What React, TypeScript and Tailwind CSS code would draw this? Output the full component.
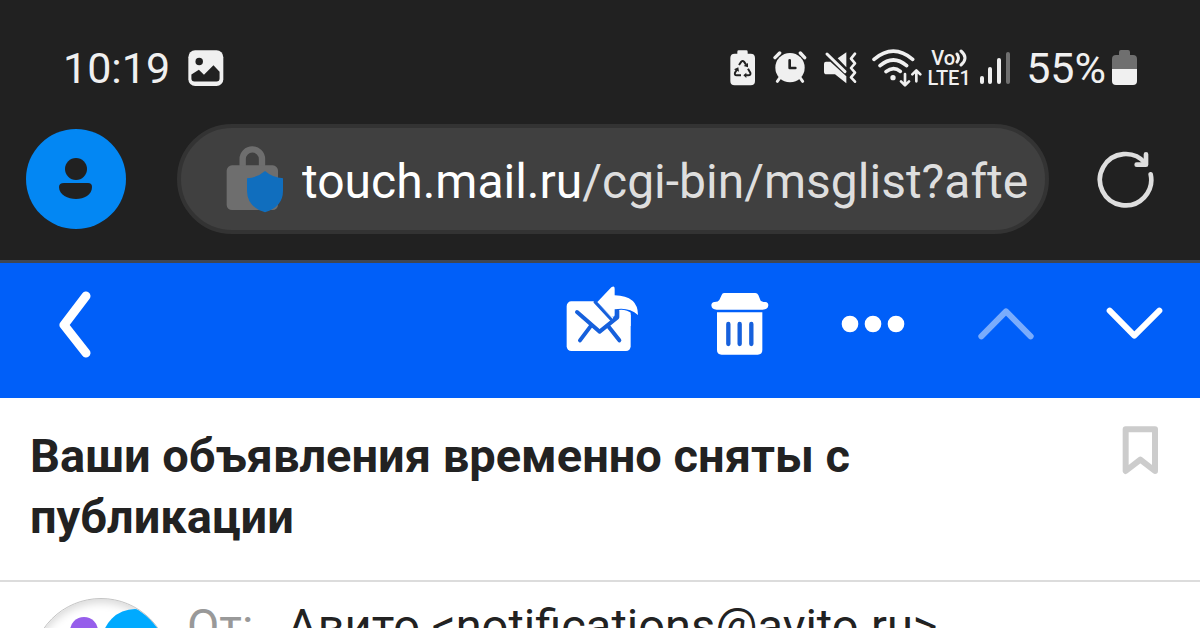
import { useState } from 'react';

const SIGNAL_BARS = [
  { x: 0, y: 24, h: 8, on: true },
  { x: 8, y: 15, h: 17, on: true },
  { x: 17, y: 6, h: 26, on: true },
  { x: 26, y: 0, h: 32, on: false },
];

function StatusBar() {
  return (
    <div className="flex h-9 items-center justify-between px-[63px] text-[#f0f0f0]">
      <div className="flex items-center gap-[18px]">
        <span className="text-[43px] leading-9">10:19</span>
        {/* Picture notification */}
        <svg width="36" height="36" viewBox="446 61 106 106">
          <rect x="447" y="62" width="103" height="105" rx="20" fill="#f0f0f0" />
          <circle cx="479" cy="95" r="11" fill="#212121" />
          <path d="M456 133L478 119L493 134L521 106L539 125V145Q539 154 530 154H465Q456 154 456 145Z" fill="#212121" />
        </svg>
      </div>

      <div className="flex items-center">
        {/* Battery protection */}
        <svg width="26" height="36" viewBox="44 45 78 108" className="mr-[17px]">
          <path d="M66 50Q66 46 70 46H93Q97 46 97 50V56H106Q119 56 119 69V138Q119 151 106 151H58Q45 151 45 138V69Q45 56 58 56H66Z" fill="#f0f0f0" />
          <g fill="none" stroke="#212121" strokeWidth="6" strokeLinejoin="round">
            <path d="M71 90L78 80Q82 76 86 80L92 89" />
            <path d="M98 101L105 113Q107 121 99 121H91" />
            <path d="M77 121H64Q57 121 59 113L64 105" />
          </g>
          <path d="M98 84V97L85 93ZM93 113V129L84 121ZM56 103L69 97L71 110Z" fill="#212121" />
        </svg>
        {/* Alarm */}
        <svg width="34" height="36" viewBox="173 48 102 108" className="mr-4">
          <circle cx="224" cy="101" r="44" fill="#f0f0f0" />
          <g fill="none" strokeLinecap="round">
            <path d="M179 71L193 57M255 57L268 71" stroke="#f0f0f0" strokeWidth="10" />
            <path d="M194 131L186 142M254 131L262 142" stroke="#f0f0f0" strokeWidth="9" />
            <path d="M223 79V102H240" stroke="#212121" strokeWidth="8" strokeLinejoin="round" />
          </g>
        </svg>
        {/* Vibrate */}
        <svg width="34" height="36" viewBox="323 45 102 108" className="mr-[15px]">
          <path d="M367 70L393 52V97ZM326 86Q326 80 332 80H345L393 124V145L359 118H334Q326 118 326 110Z" fill="#f0f0f0" />
          <g fill="none" stroke="#f0f0f0" strokeWidth="9" strokeLinecap="round" strokeLinejoin="round">
            <path d="M335 57L389 110" />
            <path d="M419 56L407 71L419 85L407 99L419 113L407 127L419 140" strokeWidth="8" />
          </g>
        </svg>
        {/* Wi-Fi with traffic arrows */}
        <svg width="50" height="38" viewBox="470 40 150 114" className="mr-[6px]">
          <g fill="none" stroke="#f0f0f0" strokeWidth="11" strokeLinecap="round" strokeLinejoin="round">
            <path d="M476 71Q534 22 592 71" />
            <path d="M494 90Q534 56 574 90" />
            <path d="M512 108Q534 90 555 107" />
            <path d="M569 115V148M557 137L569 149L581 137" strokeWidth="8" />
            <path d="M603 137V105M591 116L603 104L615 116" strokeWidth="8" />
          </g>
          <circle cx="533" cy="126" r="8" fill="#f0f0f0" />
        </svg>
        <div className="mr-[10px] flex w-[42px] flex-col items-center text-[20px] font-medium leading-5">
          <span className="flex items-center">
            Vo
            <svg width="12" height="18" viewBox="0 0 12 18" fill="none" stroke="#f0f0f0" strokeWidth="3" strokeLinecap="round">
              <path d="M2 5Q5 9 2 13M6 2Q14 9 6 16" />
            </svg>
          </span>
          <span>LTE1</span>
        </div>
        <svg width="30" height="32" viewBox="0 0 30 32" className="mr-4">
          {SIGNAL_BARS.map((bar) => (
            <rect key={bar.x} x={bar.x} y={bar.y} width="4" height={bar.h} rx="2" fill={bar.on ? '#f0f0f0' : '#6f6f6f'} />
          ))}
        </svg>
        <span className="mr-[6px] text-[43px] leading-9">55%</span>
        {/* Battery level */}
        <svg width="25" height="36" viewBox="0 0 25 36">
          <path d="M7 2Q7 0 9 0H16Q18 0 18 2V5H21Q25 5 25 9V19H0V9Q0 5 4 5H7Z" fill="#6f6f6f" />
          <path d="M0 19H25V31Q25 35 21 35H4Q0 35 0 31Z" fill="#f0f0f0" />
        </svg>
      </div>
    </div>
  );
}

function AddressBar() {
  return (
    <div className="mt-[38px] flex items-center pl-[26px] pr-[46px]">
      <button type="button" aria-label="Профиль" className="shrink-0">
        <svg width="100" height="100" viewBox="0 0 100 100">
          <circle cx="50" cy="50" r="50" fill="#0387f3" />
          <circle cx="50" cy="40" r="11" fill="#212121" />
          <path d="M38 54H62Q66 54 66 58C66 66 58 70 50 70S33 66 33 58Q33 54 38 54Z" fill="#212121" />
        </svg>
      </button>

      <button
        type="button"
        className="ml-[51px] mr-[47px] flex h-[110px] min-w-0 flex-1 items-center overflow-hidden rounded-full border-4 border-[#333333] bg-[#404040] pl-[45px] pr-4 text-left"
      >
        {/* Lock with a shield */}
        <svg width="58" height="68" viewBox="678 107 174 204" className="mr-[18px] shrink-0">
          <path d="M728 172V149A29 29 0 0 1 786 149V172" fill="none" stroke="#6e6e6e" strokeWidth="19" />
          <rect x="680" y="168" width="154" height="134" rx="16" fill="#6e6e6e" />
          <path d="M795 185Q818 205 849 207V245Q849 292 795 309Q741 292 741 245V207Q772 205 795 185Z" fill="#106ebe" />
        </svg>
        <span className="min-w-0 flex-1 overflow-hidden whitespace-nowrap pt-[5px] text-[48px] text-[#dedede]">
          <span className="text-white">touch.mail.ru</span>/cgi-bin/msglist?afte
        </span>
      </button>

      <button type="button" aria-label="Обновить" className="shrink-0">
        <svg width="58" height="58" viewBox="348 120 174 174" fill="none" stroke="#dedede" strokeWidth="14" strokeLinecap="round" strokeLinejoin="round">
          <path d="M512 193A77 77 0 1 1 496 160" />
          <path d="M498 133V164H470" />
        </svg>
      </button>
    </div>
  );
}

function Toolbar() {
  return (
    <nav className="flex h-[135px] items-center bg-[#005ff9] pb-[13px] pl-[58px] pr-[37px] text-white">
      <a href="#" aria-label="Назад" className="mr-auto">
        <svg width="34" height="68" viewBox="0 0 34 68" fill="none" stroke="currentColor" strokeWidth="9" strokeLinecap="round" strokeLinejoin="round">
          <path d="M28 6L6 35L28 63" />
        </svg>
      </a>

      <div className="flex items-center gap-[72px]">
        <button type="button" aria-label="Ответить">
          <svg width="73" height="76" viewBox="78 50 219 228">
            <rect x="80" y="96" width="192" height="149" rx="14" fill="currentColor" />
            <path d="M163 92L225 150L236 146V122Q255 118 280 134V90H163Z" fill="#005ff9" />
            <path d="M236 134Q256 130 272 136V170H236Z" fill="currentColor" />
            <path d="M162 100L214 149L180 182L120 130L140 100Z" fill="currentColor" />
            <g fill="none" stroke="#1660dc" strokeWidth="12" strokeLinecap="round" strokeLinejoin="round">
              <path d="M111 128L179 187L232 144V124" />
              <path d="M165 98L213 150" strokeWidth="9" />
              <path d="M151 172L120 213M206 172L238 213" />
            </g>
            <path d="M172 98L214 54Q224 48 224 58V78Q294 80 294 137Q266 112 224 120V138Q222 146 213 140Z" fill="currentColor" />
          </svg>
        </button>
        <button type="button" aria-label="Удалить">
          <svg width="58" height="64" viewBox="513 66 174 192">
            <path d="M552 69H646Q652 69 655 75L662 92Q666 96 676 96Q685 97 685 106Q684 119 668 119H530Q515 119 514 106Q514 97 524 96Q535 96 538 90L545 75Q547 69 552 69Z" fill="currentColor" />
            <path d="M531 127H667V240Q667 254 653 254H545Q531 254 531 240Z" fill="currentColor" />
            <path d="M565 162V222M599 162V222M634 162V222" stroke="#1660dc" strokeWidth="13" strokeLinecap="round" />
          </svg>
        </button>
        <button type="button" aria-label="Ещё">
          <svg width="64" height="18" viewBox="62 136 192 54" fill="currentColor">
            <circle cx="89" cy="163" r="25" />
            <circle cx="158" cy="163" r="25" />
            <circle cx="227" cy="163" r="25" />
          </svg>
        </button>
        <button type="button" aria-label="Предыдущее письмо" disabled className="text-[#7aacfc]">
          <svg width="57" height="34" viewBox="472 110 171 102" fill="none" stroke="currentColor" strokeWidth="18" strokeLinecap="round" strokeLinejoin="round">
            <path d="M485 198L559 123L633 198" />
          </svg>
        </button>
        <button type="button" aria-label="Следующее письмо">
          <svg width="57" height="34" viewBox="858 112 171 102" fill="none" stroke="currentColor" strokeWidth="18" strokeLinecap="round" strokeLinejoin="round">
            <path d="M869 123L943 198L1018 123" />
          </svg>
        </button>
      </div>
    </nav>
  );
}

export default function App() {
  const [flagged, setFlagged] = useState(false);

  return (
    <div className="flex h-screen flex-col overflow-hidden bg-white font-['Roboto',sans-serif] text-[#222222]">
      <header className="shrink-0 border-b-[3px] border-[#3f4652] bg-[#212121] pb-[26px] pt-[50px]">
        <StatusBar />
        <AddressBar />
      </header>
      <div className="shrink-0">
        <Toolbar />
      </div>

      <main className="min-h-0 flex-1">
        <div className="flex items-start justify-between border-b-2 border-[#dcdcdc] pb-[33px] pl-[30px] pr-[41px] pt-[27px]">
          <h1 className="max-w-[900px] text-[47px] font-bold leading-[61px]">
            Ваши объявления временно сняты с публикации
          </h1>
          <button type="button" aria-label="Отметить" onClick={() => setFlagged(!flagged)} className="shrink-0">
            <svg width="37" height="50" viewBox="124 74 111 150" fill={flagged ? '#cccccc' : 'none'} stroke="#cccccc" strokeWidth="18" strokeLinejoin="round">
              <path d="M135 87H223V212L179 178L135 212Z" />
            </svg>
          </button>
        </div>

        <div className="flex items-start pl-[31px] pt-4">
          {/* Sender avatar */}
          <div className="size-[140px] shrink-0 overflow-hidden rounded-full border border-[#c4c4c4] shadow-[inset_0_4px_8px_rgba(0,0,0,0.15)]">
            <svg width="138" height="138" viewBox="0 0 138 138">
              <circle cx="52" cy="32" r="14" fill="#965eeb" />
              <circle cx="103" cy="43" r="33" fill="#00aaff" />
            </svg>
          </div>
          <dl className="flex text-[47px] leading-[56px]">
            <dt className="w-[100px] pl-4 text-[#999999]">От:</dt>
            <dd className="pl-4">Авито &lt;notifications@avito.ru&gt;</dd>
          </dl>
        </div>
      </main>
    </div>
  );
}
